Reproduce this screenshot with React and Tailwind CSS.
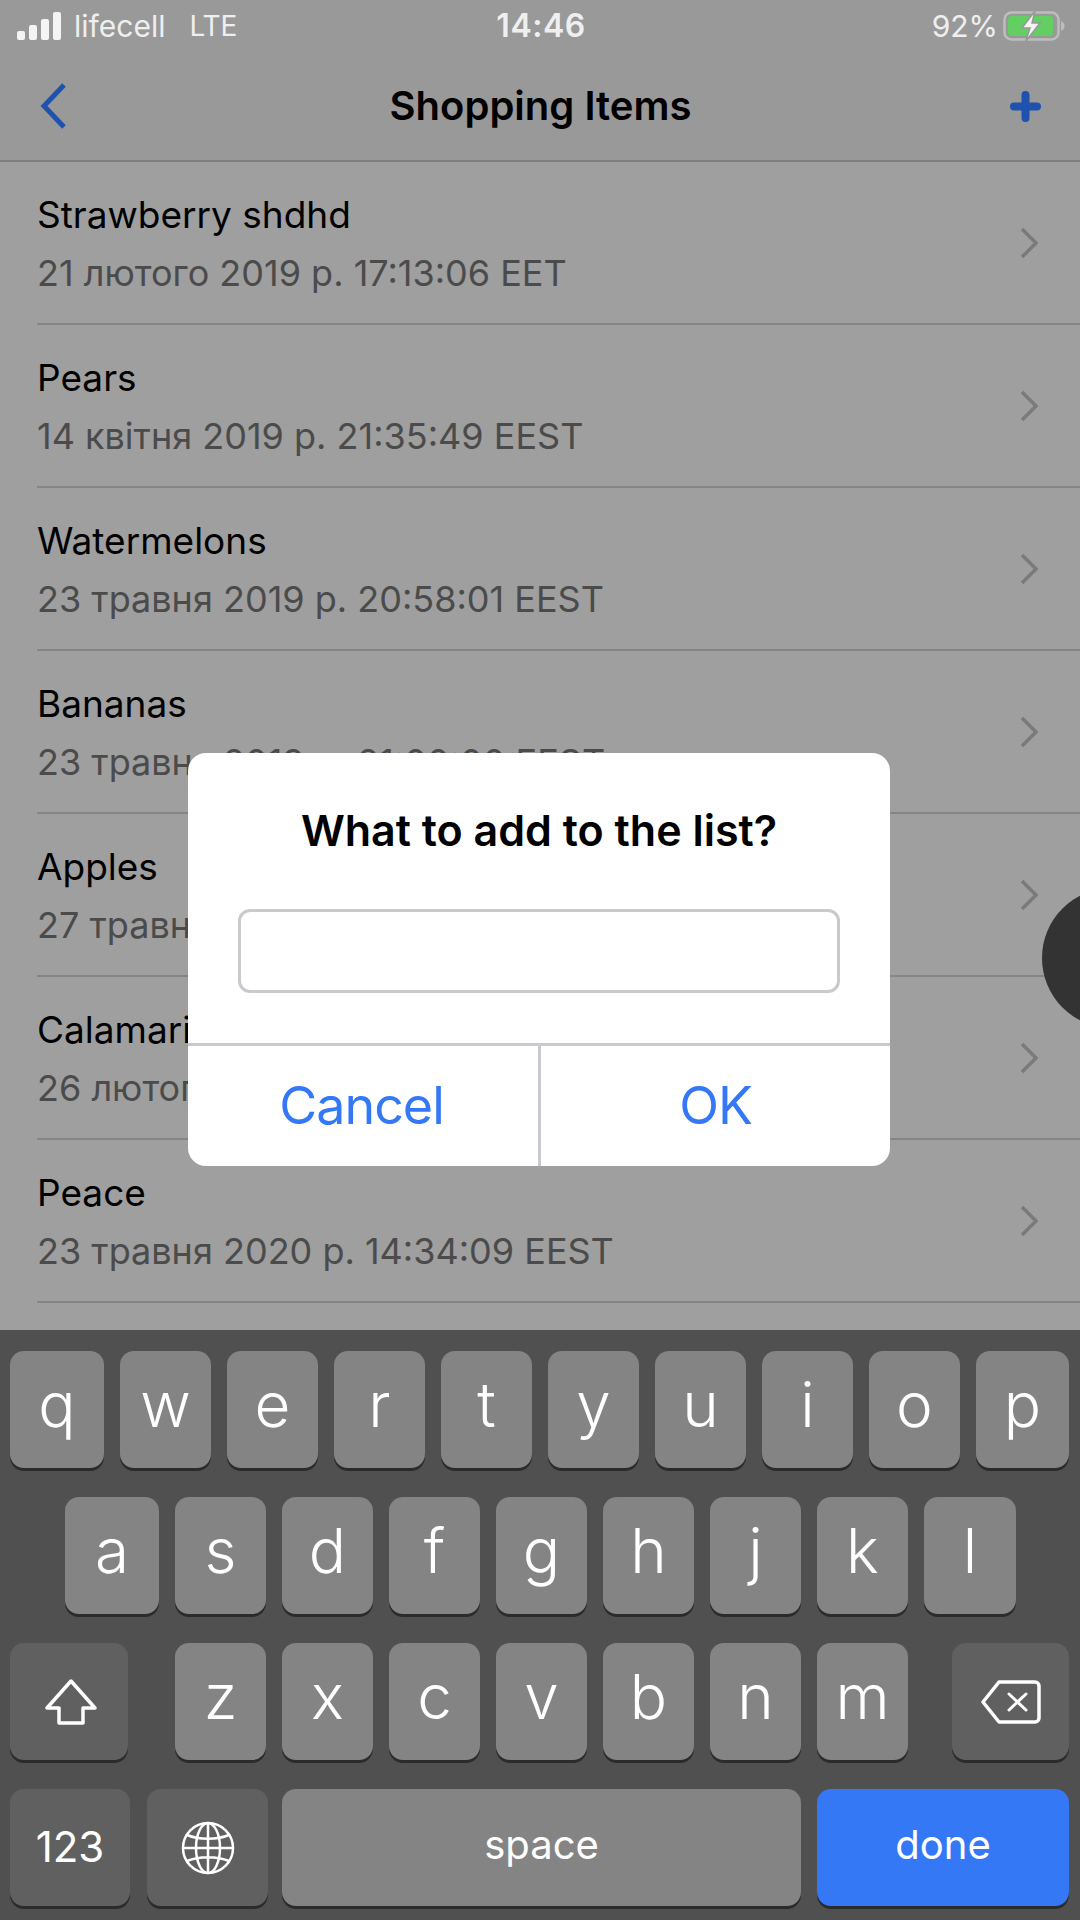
const items = [
  { title: "Strawberry shdhd", date: "21 лютого 2019 р. 17:13:06 EET" },
  { title: "Pears", date: "14 квітня 2019 р. 21:35:49 EEST" },
  { title: "Watermelons", date: "23 травня 2019 р. 20:58:01 EEST" },
  { title: "Bananas", date: "23 травня 2019 р. 21:00:00 EEST" },
  { title: "Apples", date: "27 травня 2019 р. 11:20:14 EEST" },
  { title: "Calamari", date: "26 лютого 2020 р. 18:42:37 EET" },
  { title: "Peace", date: "23 травня 2020 р. 14:34:09 EEST" },
];

const Key = ({ children, className = "w-[91px]" }) => (
  <div className={`h-[117px] rounded-[14px] bg-[#848484] shadow-[0_3px_0_#2b2b2b] flex items-center justify-center text-white ${className}`}>
    {children}
  </div>
);

const Letter = ({ children }) => (
  <span className="text-[62px] leading-none font-light -translate-y-[5px]">{children}</span>
);

const Chevron = () => (
  <svg width="18" height="32" viewBox="0 0 18 32" fill="none" stroke="#7a7a7a" strokeWidth="3.5">
    <path d="M2 2l14 14L2 30" />
  </svg>
);

const StatusBar = () => (
  <div className="h-[52px] flex items-center pl-[17px] pr-[15px] text-[#efefef] text-[30px] bg-[#999999]">
    <div className="flex-1 flex items-center">
      <svg width="45" height="28" viewBox="0 0 45 28" fill="#f4f4f4">
        <rect x="0" y="19" width="8" height="9" rx="2" />
        <rect x="12" y="13" width="8" height="15" rx="2" />
        <rect x="24" y="7" width="8" height="21" rx="2" />
        <rect x="36" y="0" width="8" height="28" rx="2" />
      </svg>
      <span className="ml-[12px]">lifecell</span>
      <span className="ml-[24px] text-[28px]">LTE</span>
    </div>
    <div className="text-[32px] font-semibold tracking-[0.5px]">14:46</div>
    <div className="flex-1 flex items-center justify-end">
      <span>92%</span>
      <svg className="ml-[5px]" width="62" height="30" viewBox="0 0 62 30" fill="none">
        <rect x="1.5" y="1.5" width="54" height="27" rx="7" stroke="#bdbdbd" strokeWidth="2.5" />
        <rect x="5" y="5" width="45" height="20" rx="3.5" fill="#63cf63" />
        <path d="M58 10c2.500 1 3.500 3 3.500 5s-1 4-3.500 5z" fill="#bdbdbd" />
        <path d="M32 0L19 17h8l-4 13 14-18h-8z" fill="#f4f4f4" stroke="#989898" strokeWidth="1.5" />
      </svg>
    </div>
  </div>
);

const NavBar = () => (
  <div className="h-[110px] flex items-center pl-[40px] pr-[39px] bg-[#999999] border-b-2 border-[#7f7f7f]">
    <div className="w-[31px]">
      <svg width="26" height="46" viewBox="0 0 26 46" fill="none" stroke="#1f52ad" strokeWidth="5">
        <path d="M24 2L4 23l20 21" />
      </svg>
    </div>
    <div className="flex-1 text-center text-[40px] font-semibold text-black">Shopping Items</div>
    <svg width="31" height="31" viewBox="0 0 31 31" fill="none" stroke="#1f52ad" strokeWidth="8" strokeLinecap="round">
      <path d="M15.500 4v23M4 15.500h23" />
    </svg>
  </div>
);

const Row = ({ item }) => (
  <div className="ml-[37px] h-[163px] shrink-0 border-b-2 border-[#858585] flex items-center pr-[42px]">
    <div className="flex-1 pt-[3px]">
      <div className="text-[37px] leading-[44px] text-black">{item.title}</div>
      <div className="mt-[14px] text-[36px] leading-[44px] text-[#4b4b4b]">{item.date}</div>
    </div>
    <Chevron />
  </div>
);

const Dialog = () => (
  <div className="absolute left-[188px] top-[753px] w-[702px] h-[413px] rounded-[18px] bg-white flex flex-col overflow-hidden">
    <div className="h-[156px] pt-[52px] text-center text-[43px] leading-[50px] font-semibold text-black">What to add to the list?</div>
    <div className="mx-[50px] h-[84px] rounded-[12px] border-[3px] border-[#c9c9ce]" />
    <div className="mt-[50px] flex-1 flex border-t-[3px] border-[#c9c9ce] text-[52px] tracking-[-1px] text-[#3478f6]">
      <div className="w-[353px] pr-[3px] flex items-center justify-center border-r-[3px] border-[#c9c9ce]">Cancel</div>
      <div className="flex-1 flex items-center justify-center">OK</div>
    </div>
  </div>
);

const Keyboard = () => (
  <div className="h-[590px] shrink-0 bg-[#505050] pt-[21px] flex flex-col gap-[29px] pl-[10px]">
    <div className="flex gap-[16px]">
      <Key className="w-[94px]"><Letter>q</Letter></Key>
      {["w", "e", "r", "t", "y", "u", "i", "o"].map((k) => (
        <Key key={k}><Letter>{k}</Letter></Key>
      ))}
      <Key className="w-[93px]"><Letter>p</Letter></Key>
    </div>
    <div className="flex gap-[16px] pl-[55px]">
      <Key className="w-[94px]"><Letter>a</Letter></Key>
      {["s", "d", "f", "g", "h", "j", "k"].map((k) => (
        <Key key={k}><Letter>{k}</Letter></Key>
      ))}
      <Key className="w-[92px]"><Letter>l</Letter></Key>
    </div>
    <div className="flex gap-[16px]">
      <Key className="w-[118px] mr-[31px] !bg-[#606060]">
        <svg className="ml-[3px]" width="52" height="46" viewBox="0 0 52 46" fill="none" stroke="#fff" strokeWidth="3.500" strokeLinejoin="round">
          <path d="M26 2L2 29h12v15h24V29h12z" />
        </svg>
      </Key>
      {["z", "x", "c", "v", "b", "n", "m"].map((k) => (
        <Key key={k}><Letter>{k}</Letter></Key>
      ))}
      <Key className="w-[117px] ml-[28px] !bg-[#606060]">
        <svg width="60" height="44" viewBox="0 0 60 44" fill="none" stroke="#fff" strokeWidth="3.500" strokeLinejoin="round" strokeLinecap="round">
          <path d="M18 2h36a4 4 0 0 1 4 4v32a4 4 0 0 1-4 4H18L2 22z" />
          <path d="M28 14l17 16M45 14L28 30" strokeWidth="3" />
        </svg>
      </Key>
    </div>
    <div className="flex">
      <Key className="w-[120px] !bg-[#606060]"><span className="text-[42px] -translate-y-[1px]">123</span></Key>
      <Key className="w-[121px] ml-[17px] !bg-[#606060]">
        <svg width="54" height="54" viewBox="0 0 54 54" fill="none" stroke="#fff" strokeWidth="2.500">
          <circle cx="27" cy="27" r="25" />
          <ellipse cx="27" cy="27" rx="12" ry="25" />
          <path d="M27 2v50M2 27h50M6 14c12 5 30 5 42 0M6 40c12-5 30-5 42 0" />
        </svg>
      </Key>
      <Key className="w-[519px] ml-[14px]"><span className="text-[40px] -translate-y-[3px]">space</span></Key>
      <Key className="w-[252px] ml-[16px] !bg-[#3478f6]"><span className="text-[40px] -translate-y-[3px]">done</span></Key>
    </div>
  </div>
);

const App = () => {
  return (
    <div className="relative w-[1080px] h-[1920px] overflow-hidden flex flex-col bg-[#9f9f9f] font-['Inter',sans-serif]">
      <StatusBar />
      <NavBar />
      <div className="flex-1 overflow-hidden flex flex-col">
        {items.map((item) => (
          <Row key={item.title} item={item} />
        ))}
      </div>
      <Keyboard />
      <Dialog />
      {/* floating assistive touch button at the edge */}
      <div className="absolute left-[1042px] top-[888px] size-[140px] rounded-full bg-[#333333]" />
    </div>
  );
};

export default App;
